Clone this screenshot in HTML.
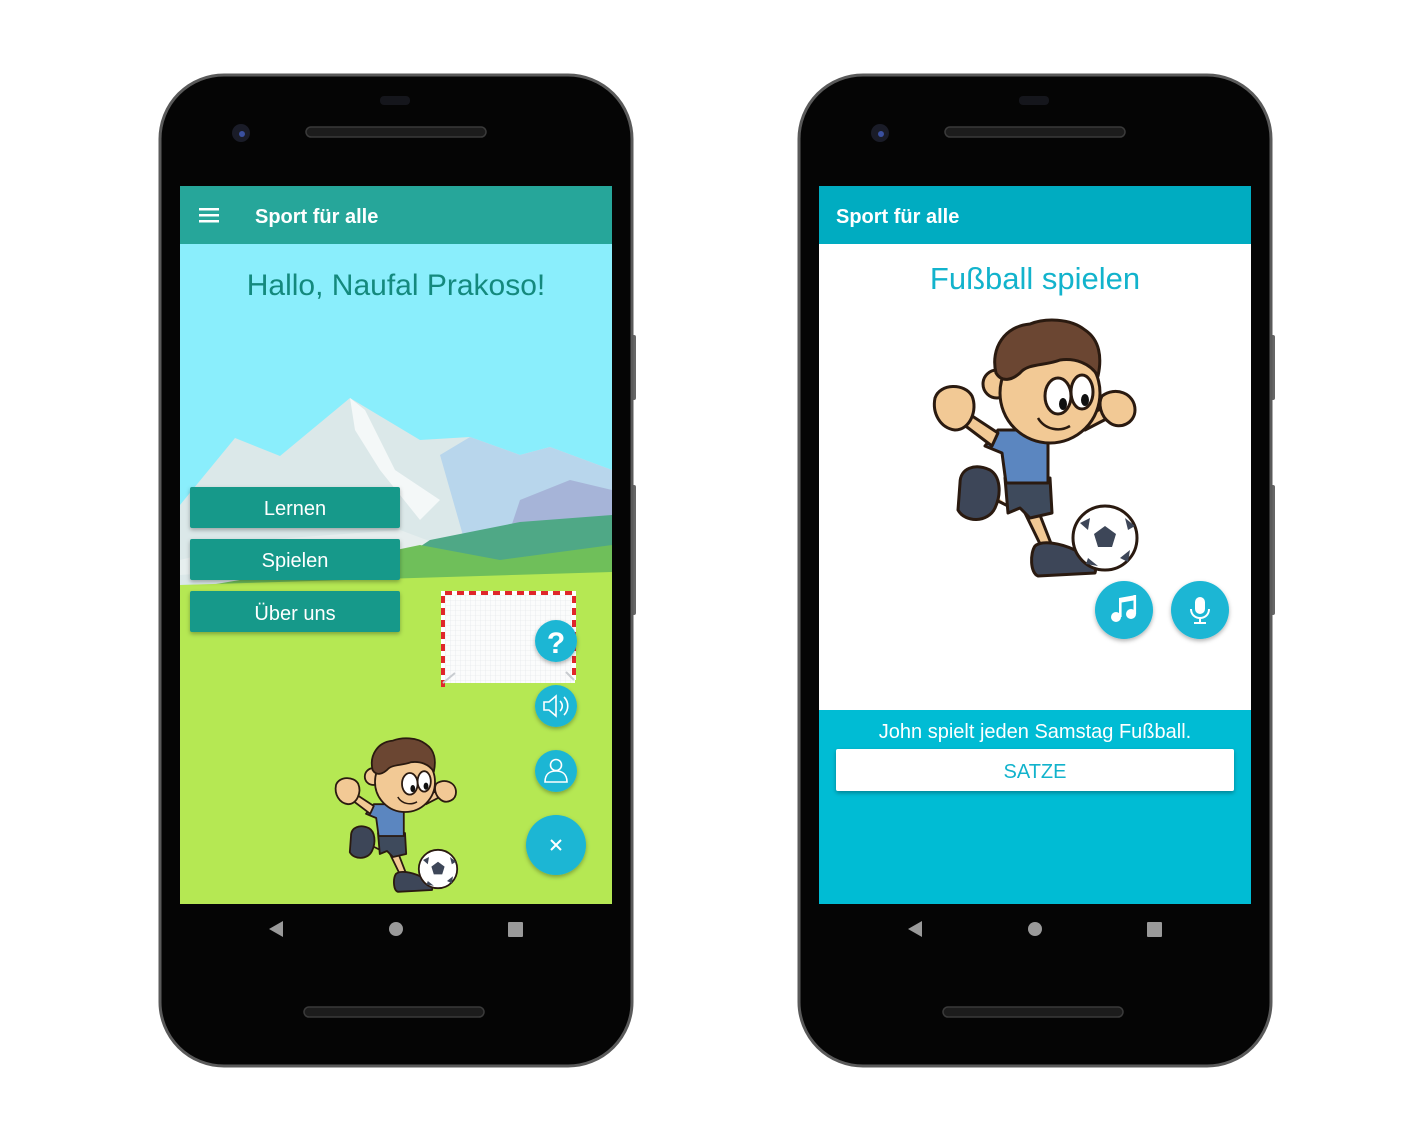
<!DOCTYPE html>
<html><head><meta charset="utf-8"><style>
html,body{margin:0;padding:0;background:#fff;}
svg{display:block;}
text{font-family:"Liberation Sans",sans-serif;}
</style></head><body>
<svg width="1416" height="1140" viewBox="0 0 1416 1140" xmlns="http://www.w3.org/2000/svg">
<defs>
<symbol id="kid" viewBox="0 0 210 265" overflow="visible">
  <g stroke="#2a1a10" stroke-width="3" stroke-linejoin="round">
    <path d="M82 190 L62 180 L55 170" fill="#f2c995"/>
    <path d="M30 165 C30 150 45 145 60 152 C70 158 72 175 65 190 C58 205 35 205 28 192 Z" fill="#3d4658"/>
    <path d="M95 195 L112 230 L122 228 L108 192 Z" fill="#f2c995"/>
    <path d="M75 160 L120 160 L122 195 L100 200 L90 190 L78 195 Z" fill="#3e4a5c"/>
    <path d="M68 112 L118 112 L118 165 L76 165 L72 135 L55 128 Z" fill="#5b86c0"/>
    <path d="M68 115 L30 90 L25 100 L62 128 Z" fill="#f2c995"/>
    <path d="M5 80 C10 65 35 65 42 78 C48 92 40 112 25 112 C10 110 2 95 5 80 Z" fill="#f2c995"/>
    <path d="M150 100 L178 88 L182 98 L155 112 Z" fill="#f2c995"/>
    <path d="M172 78 C185 68 205 75 205 92 C205 105 190 112 180 105 C170 98 168 85 172 78 Z" fill="#f2c995"/>
    <circle cx="67" cy="66" r="14" fill="#f2c995"/>
    <ellipse cx="120" cy="75" rx="50" ry="50" fill="#f2c995"/>
    <path d="M66 55 C60 30 75 8 100 6 C115 0 140 0 155 12 C170 22 172 40 168 58 C160 45 145 40 130 42 C115 48 98 45 90 55 C82 62 72 65 66 55 Z" fill="#6b4632"/>
    <ellipse cx="128" cy="78" rx="13" ry="18" fill="#fff"/>
    <ellipse cx="152" cy="74" rx="11" ry="17" fill="#fff"/>
    <path d="M105 228 C112 222 130 225 145 232 C160 238 168 245 165 255 L108 258 C100 255 100 235 105 228 Z" fill="#3d4658"/>
  </g>
  <ellipse cx="133" cy="86" rx="4" ry="6" fill="#111"/>
  <ellipse cx="155" cy="82" rx="4" ry="6" fill="#111"/>
  <path d="M108 100 C115 112 130 114 140 108" stroke="#2a1a10" stroke-width="2.5" fill="none"/>
  <circle cx="175" cy="220" r="32" fill="#fff" stroke="#2a1a10" stroke-width="3"/>
  <path d="M175 208 L186 216 L182 229 L168 229 L164 216 Z" fill="#3d4658"/>
  <path d="M150 205 L160 200 L158 212 Z M195 200 L205 208 L198 212 Z M158 240 L168 248 L156 246 Z M190 240 L200 232 L198 244 Z" fill="#3d4658"/>
</symbol>
<filter id="sh" x="-30%" y="-30%" width="160%" height="170%"><feDropShadow dx="0" dy="2" stdDeviation="2" flood-opacity="0.3"/></filter>
<pattern id="net" width="5" height="5" patternUnits="userSpaceOnUse"><path d="M5 0 L0 0 0 5" fill="none" stroke="#dfe3e6" stroke-width="0.6"/></pattern>
</defs>

<rect x="631" y="335" width="5" height="65" rx="2" fill="#666"/>
<rect x="631" y="485" width="5" height="130" rx="2" fill="#666"/>
<rect x="160" y="75" width="472" height="991" rx="64" fill="#050505" stroke="#5a5a5a" stroke-width="3"/>
<rect x="380" y="96" width="30" height="9" rx="4" fill="#15161c"/>
<rect x="306" y="127" width="180" height="10" rx="5" fill="#1c1c1c" stroke="#3a3a3a" stroke-width="1.5"/>
<circle cx="241" cy="133" r="9" fill="#1a1c28"/><circle cx="242" cy="134" r="3" fill="#3a50a0"/>
<rect x="304" y="1007" width="180" height="10" rx="5" fill="#1c1c1c" stroke="#3a3a3a" stroke-width="1.5"/>

<svg x="180" y="186" width="432" height="718" viewBox="180 186 432 718">
  <rect x="180" y="244" width="432" height="660" fill="#8aeefc"/>
  <polygon points="180,505 235,438 280,456 350,398 420,440 470,437 520,455 550,447 612,470 612,575 180,585" fill="#dbe8e9"/>
  <polygon points="440,455 470,437 520,455 550,447 612,470 612,560 470,560" fill="#b8d6ec"/>
  <polygon points="520,500 570,480 612,490 612,560 500,560" fill="#a6b4d8"/>
  <polygon points="350,398 365,410 395,470 440,500 420,520 380,470 355,430" fill="#f4f8f8"/>
  <polygon points="180,560 260,540 400,530 440,545 400,560 180,575" fill="#e6eeee"/>
  <polygon points="400,560 430,540 480,530 520,522 612,515 612,560 400,580" fill="#4fa886"/>
  <polygon points="180,590 300,570 420,545 500,560 612,545 612,600 180,600" fill="#6fbf5a"/>
  <polygon points="180,585 612,572 612,904 180,904" fill="#b5e853"/>
  <rect x="441" y="591" width="134" height="92" fill="#fbfcfc"/>
  <rect x="441" y="591" width="134" height="92" fill="url(#net)"/>
  <path d="M443 687 L443 593 L574 593 L574 680" fill="none" stroke="#fff" stroke-width="4"/>
  <path d="M443 687 L443 593 L574 593 L574 680" fill="none" stroke="#e0262b" stroke-width="4" stroke-dasharray="7 5"/>
  <path d="M443 683 L455 673 M574 680 L566 672" stroke="#c8ccd0" stroke-width="2"/>
  <use href="#kid" x="333" y="737" width="126" height="159"/>
  <rect x="180" y="186" width="432" height="58" fill="#26a69a"/>
</svg>
<rect x="199" y="208" width="20" height="2.5" fill="#fff"/>
<rect x="199" y="214" width="20" height="2.5" fill="#fff"/>
<rect x="199" y="220" width="20" height="2.5" fill="#fff"/>
<text x="255" y="223" font-size="20" font-weight="bold" fill="#fff">Sport für alle</text>
<text x="396" y="295" font-size="30" fill="#14897d" text-anchor="middle">Hallo, Naufal Prakoso!</text>

<g filter="url(#sh)" fill="#16998a">
<rect x="190" y="487" width="210" height="41" rx="2"/>
<rect x="190" y="539" width="210" height="41" rx="2"/>
<rect x="190" y="591" width="210" height="41" rx="2"/>
</g>
<g font-size="20" fill="#fff" text-anchor="middle">
<text x="295" y="515">Lernen</text>
<text x="295" y="567">Spielen</text>
<text x="295" y="620">Über uns</text>
</g>

<g filter="url(#sh)" fill="#1bb6d4">
<circle cx="556" cy="641" r="21"/>
<circle cx="556" cy="706" r="21"/>
<circle cx="556" cy="771" r="21"/>
<circle cx="556" cy="845" r="30"/>
</g>
<text x="556" y="653" font-size="30" font-weight="bold" fill="#fff" text-anchor="middle">?</text>
<g fill="none" stroke="#fff" stroke-width="1.6">
<path d="M544 702 L549 702 L556 696 L556 716 L549 710 L544 710 Z"/>
<path d="M560 701 C563 704 563 708 560 711"/>
<path d="M564 697 C569 702 569 710 564 715"/>
<circle cx="556" cy="765" r="5.5"/>
<path d="M545 782 C545 774 550 771 556 771 C562 771 567 774 567 782 Z"/>
<path d="M551 840 L561 850 M561 840 L551 850" stroke-width="2"/>
</g>

<g fill="#9a9a9a">
<polygon points="283,921 283,937 269,929"/>
<circle cx="396" cy="929" r="7"/>
<rect x="508" y="922" width="15" height="15" rx="1"/>
</g>

<rect x="1270" y="335" width="5" height="65" rx="2" fill="#666"/>
<rect x="1270" y="485" width="5" height="130" rx="2" fill="#666"/>
<rect x="799" y="75" width="472" height="991" rx="64" fill="#050505" stroke="#5a5a5a" stroke-width="3"/>
<rect x="1019" y="96" width="30" height="9" rx="4" fill="#15161c"/>
<rect x="945" y="127" width="180" height="10" rx="5" fill="#1c1c1c" stroke="#3a3a3a" stroke-width="1.5"/>
<circle cx="880" cy="133" r="9" fill="#1a1c28"/><circle cx="881" cy="134" r="3" fill="#3a50a0"/>
<rect x="943" y="1007" width="180" height="10" rx="5" fill="#1c1c1c" stroke="#3a3a3a" stroke-width="1.5"/>

<rect x="819" y="186" width="432" height="718" fill="#fff"/>
<rect x="819" y="186" width="432" height="58" fill="#00acc1"/>
<text x="836" y="223" font-size="20" font-weight="bold" fill="#fff">Sport für alle</text>
<text x="1035" y="289" font-size="31" fill="#12b3cc" text-anchor="middle">Fußball spielen</text>
<use href="#kid" x="930" y="318" width="210" height="265"/>
<g filter="url(#sh)" fill="#1bb6d4">
<circle cx="1124" cy="610" r="29"/>
<circle cx="1200" cy="610" r="29"/>
</g>
<g fill="#fff">
<circle cx="1116" cy="617" r="5"/><circle cx="1131" cy="614" r="5"/>
<rect x="1119" y="598" width="2.6" height="19"/><rect x="1133.5" y="595" width="2.6" height="19"/>
<polygon points="1119,598 1136,595 1136,600 1119,603"/>
<rect x="1195" y="597" width="10" height="17" rx="5"/>
</g>
<g fill="none" stroke="#fff" stroke-width="2">
<path d="M1191 609 C1191 621 1209 621 1209 609"/>
<path d="M1200 617 L1200 623 M1194 623 L1206 623"/>
</g>

<rect x="819" y="710" width="432" height="194" fill="#00bcd4"/>
<text x="1035" y="738" font-size="20" fill="#fff" text-anchor="middle">John spielt jeden Samstag Fußball.</text>
<rect x="836" y="749" width="398" height="42" rx="2" fill="#fff" filter="url(#sh)"/>
<text x="1035" y="778" font-size="20" fill="#12b3cc" text-anchor="middle">SATZE</text>

<g fill="#9a9a9a">
<polygon points="922,921 922,937 908,929"/>
<circle cx="1035" cy="929" r="7"/>
<rect x="1147" y="922" width="15" height="15" rx="1"/>
</g>
</svg>
</body></html>
